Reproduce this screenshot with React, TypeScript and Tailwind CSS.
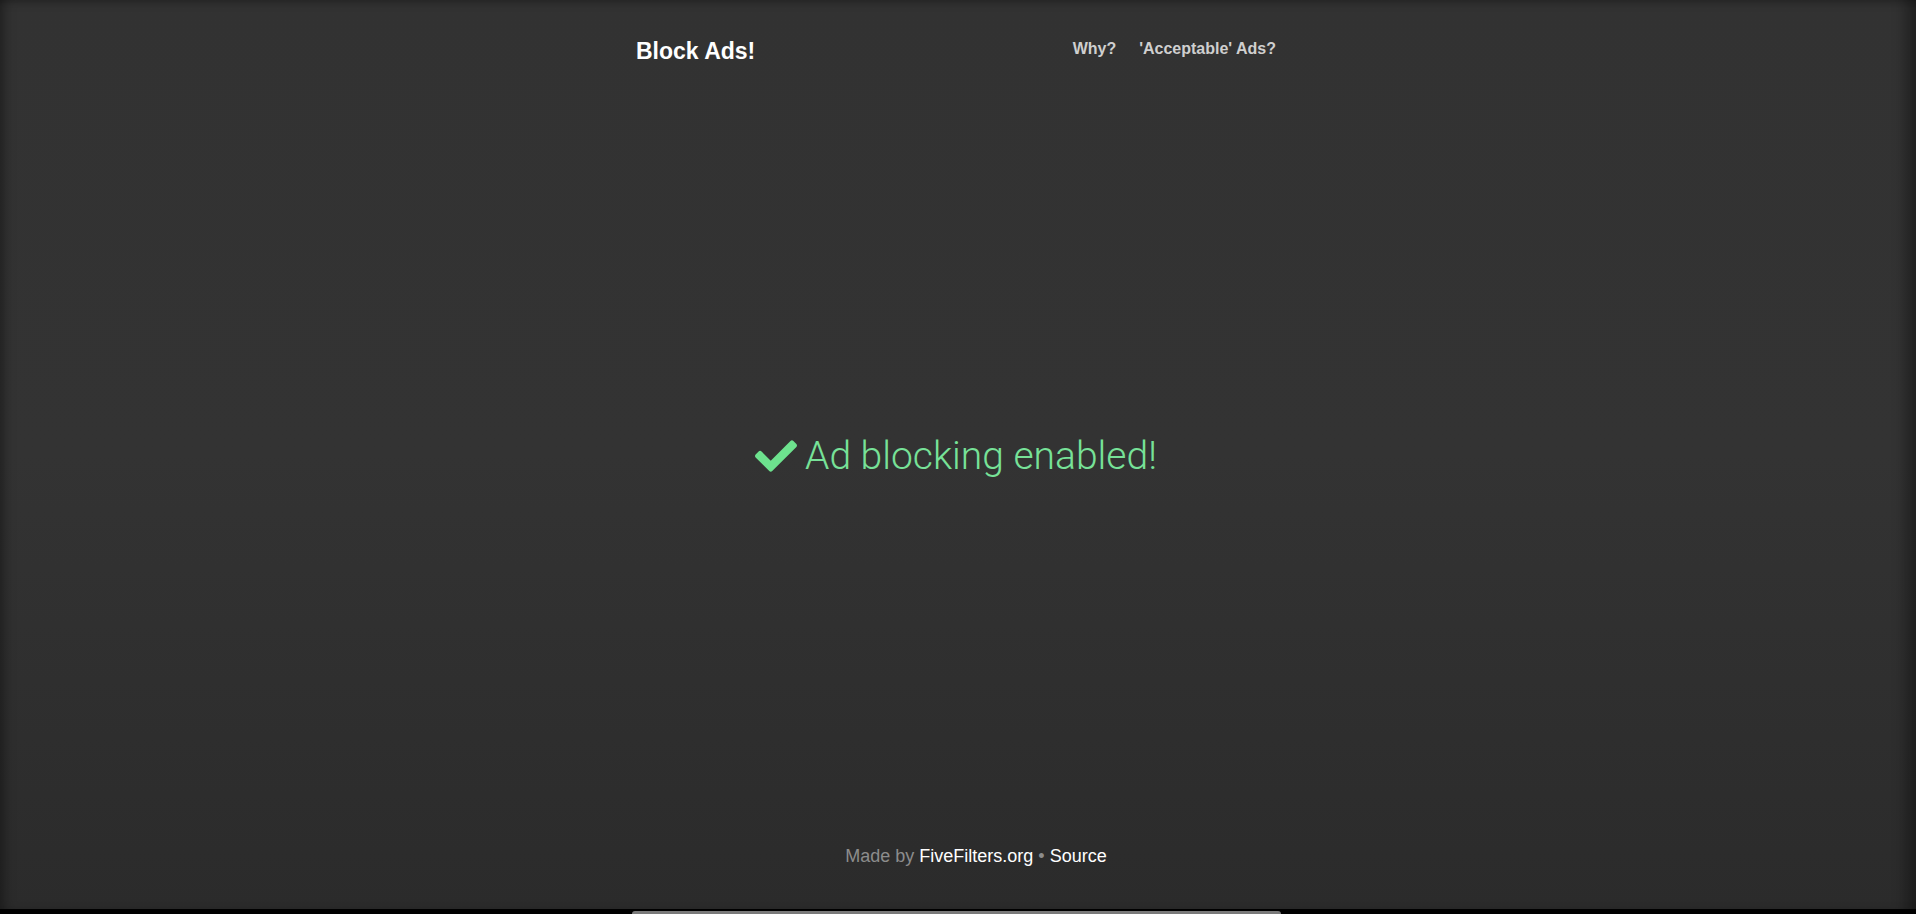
import { FaCheck } from 'react-icons/fa';

export default function App() {
  return (
    <div className="h-[914px] flex flex-col bg-black font-['Liberation_Sans',Arial,sans-serif]">
      {/* window */}
      <div className="h-[909px] flex flex-col bg-gradient-to-b from-[#323232] via-[#333333] to-[#2b2b2b] shadow-[inset_10px_0_12px_-6px_rgba(0,0,0,0.35),inset_-22px_0_14px_-12px_rgba(0,0,0,0.35),inset_0_8px_10px_-6px_rgba(0,0,0,0.25)] pr-[4px]">
        {/* Header */}
        <header className="w-[640px] mx-auto flex items-start justify-between pt-[38px]">
          <a className="text-[23px] leading-[26px] font-bold text-white">Block Ads!</a>
          <nav className="flex gap-[23px] pt-[2px] text-[16px] leading-[18px] font-bold text-[#cfcfcf]">
            <a>Why?</a>
            <a>'Acceptable' Ads?</a>
          </nav>
        </header>

        {/* Status */}
        <main className="flex-1 flex items-center justify-center pt-[2px]">
          <div className="flex items-center gap-[8px] text-[#77e298]">
            <FaCheck className="w-[42px] h-[42px] text-[#6de28e]" />
            <p className="text-[39px] leading-[46px] font-light font-['Roboto',sans-serif]">Ad blocking enabled!</p>
          </div>
        </main>

        {/* Footer */}
        <footer className="text-center text-[18px] leading-[22px] text-[#8c8c8c] pb-[42px] pl-[40px]">
          Made by <a className="text-white">FiveFilters.org</a> • <a className="text-white">Source</a>
        </footer>
      </div>
      <div className="h-[5px] flex justify-center pr-[4px]">
        <div className="w-[649px] mt-[2px] rounded-t-[6px] bg-[#7a7a7a]" />
      </div>
    </div>
  );
}
